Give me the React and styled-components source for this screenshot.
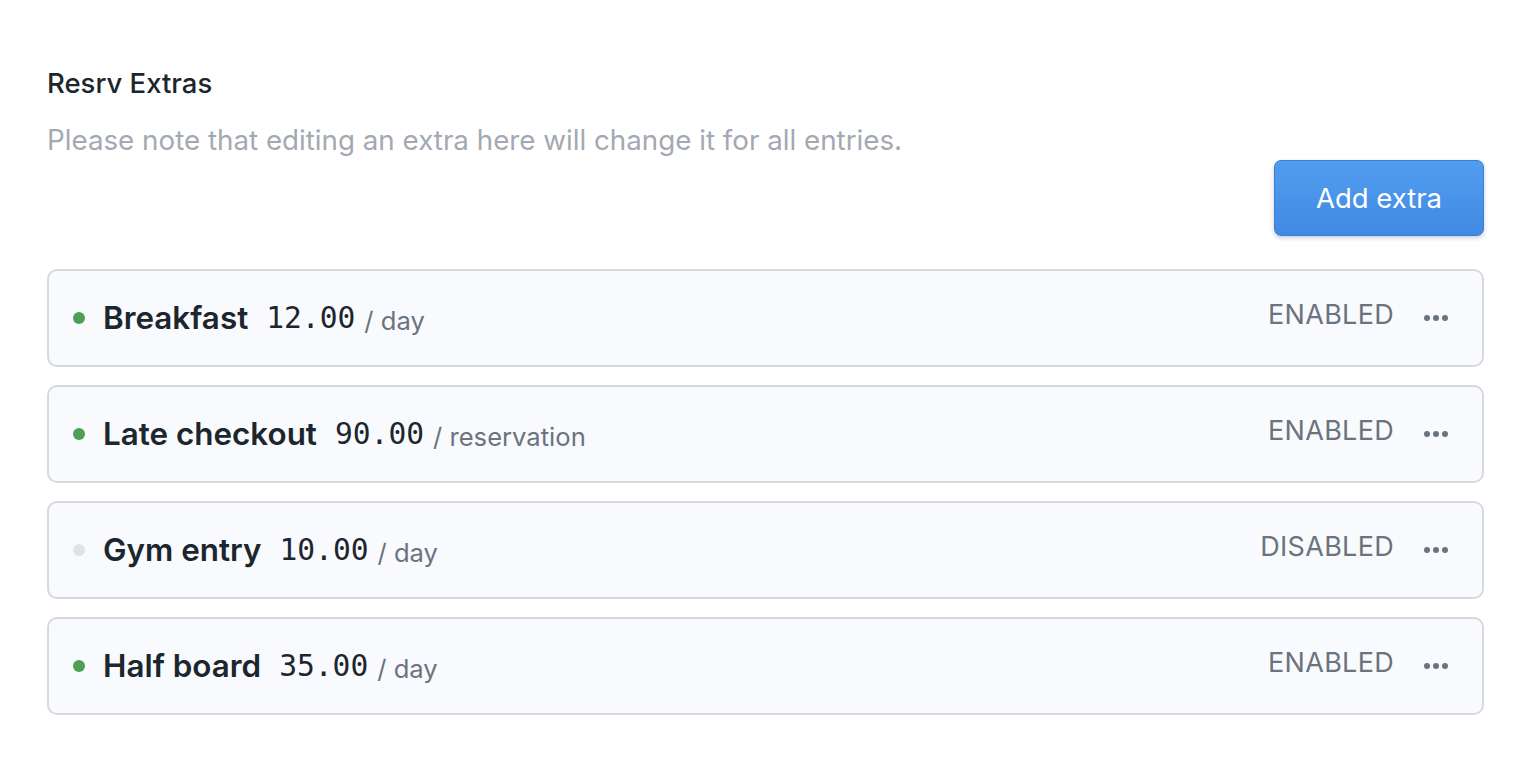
import React from "react";
import styled, { createGlobalStyle } from "styled-components";

const Global = createGlobalStyle`
  html, body { margin: 0; padding: 0; background: #ffffff; }
  body { font-family: Inter, "Noto Sans", sans-serif; -webkit-font-smoothing: antialiased; }
`;

const Page = styled.div`
  padding: 67px 44px 40px 47px;
  display: flex;
  flex-direction: column;
`;

const Title = styled.h2`
  margin: 0;
  font-size: 27.5px;
  font-weight: 500;
  color: #1c262d;
  line-height: 32px;
`;

const Note = styled.p`
  margin: 25px 0 0;
  font-size: 27.75px;
  color: #a3a9b2;
  line-height: 32px;
`;

const Actions = styled.div`
  display: flex;
  justify-content: flex-end;
  margin-top: 4px;
`;

const Button = styled.button`
  width: 210px;
  height: 76px;
  border-radius: 7px;
  border: 1px solid #3b7fd3;
  background: linear-gradient(180deg, #529df0 0%, #4189e3 100%);
  box-shadow: 0 2px 4px rgba(30, 60, 110, 0.25);
  color: #ffffff;
  font-family: Inter, sans-serif;
  font-size: 27.5px;
  font-weight: 400;
  cursor: pointer;
`;

const List = styled.div`
  display: flex;
  flex-direction: column;
  gap: 18px;
  margin-top: 33px;
`;

const Card = styled.div`
  height: 94px;
  box-sizing: content-box;
  border: 2px solid #d6d9de;
  border-radius: 10px;
  background: #f9fafd;
  display: flex;
  align-items: center;
  padding: 0 34px 0 24px;
`;

const Dot = styled.span`
  width: 12px;
  height: 12px;
  border-radius: 50%;
  background: ${(p) => (p.$on ? "#4c9f55" : "#dfe3e7")};
  flex: none;
`;

const Name = styled.span`
  margin-left: 18px;
  font-size: 31.4px;
  font-weight: 560;
  color: #1c262d;
`;

const Price = styled.span`
  margin-left: 18px;
  font-family: "DejaVu Sans Mono", "Liberation Mono", monospace;
  font-size: 29.6px;
  color: #1c262d;
`;

const Unit = styled.span`
  margin-left: 9px;
  font-size: 25.6px;
  color: #6b737d;
  position: relative;
  top: 2px;
`;

const Status = styled.span`
  margin-left: auto;
  font-size: 27px;
  color: #6b737d;
  letter-spacing: 0.3px;
  position: relative;
  top: -4px;
`;

const More = styled.span`
  margin-left: 30px;
  display: flex;
  gap: 3px;
`;

const MoreDot = styled.i`
  width: 6px;
  height: 6px;
  border-radius: 50%;
  background: #6b737d;
`;

const extras = [
  { name: "Breakfast", price: "12.00", unit: "day", on: true },
  { name: "Late checkout", price: "90.00", unit: "reservation", on: true },
  { name: "Gym entry", price: "10.00", unit: "day", on: false },
  { name: "Half board", price: "35.00", unit: "day", on: true },
];

export default function App() {
  return (
    <>
      <Global />
      <Page>
        <Title>Resrv Extras</Title>
        <Note>Please note that editing an extra here will change it for all entries.</Note>
        <Actions>
          <Button>Add extra</Button>
        </Actions>
        <List>
          {extras.map((e) => (
            <Card key={e.name}>
              <Dot $on={e.on} />
              <Name>{e.name}</Name>
              <Price>{e.price}</Price>
              <Unit>/ {e.unit}</Unit>
              <Status>{e.on ? "ENABLED" : "DISABLED"}</Status>
              <More>
                <MoreDot />
                <MoreDot />
                <MoreDot />
              </More>
            </Card>
          ))}
        </List>
      </Page>
    </>
  );
}
